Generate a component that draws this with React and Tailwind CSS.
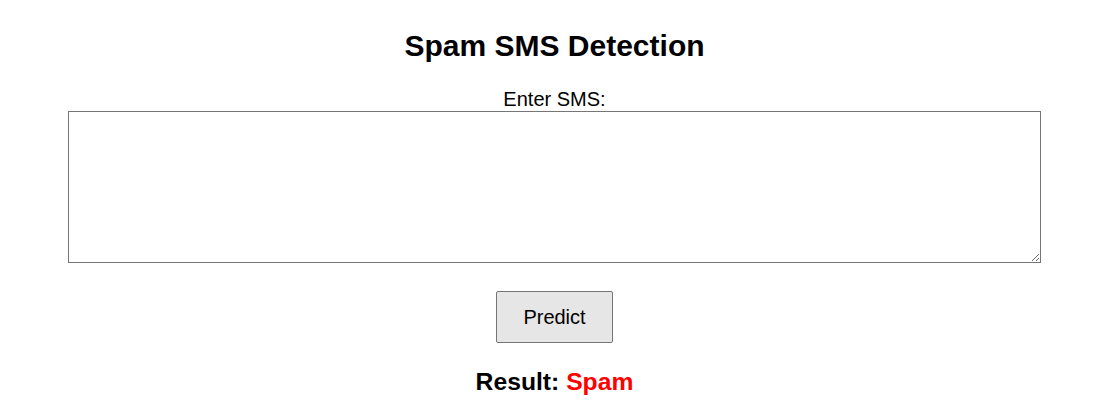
import React, { useState } from "react";

const App = () => {
  const [sms, setSms] = useState("");
  const [result] = useState("Spam");

  return (
    <div className="min-h-screen bg-white pl-[13px] font-['Liberation_Sans',Arial,sans-serif] text-black">
      <div className="flex flex-col items-center pt-[28px]">
        <h1 className="text-[30px] font-bold leading-[36px]">Spam SMS Detection</h1>
        <form className="mt-[24px] flex flex-col items-center" onSubmit={(e) => e.preventDefault()}>
          <label htmlFor="sms" className="text-[20px] leading-[23px]">Enter SMS:</label>
          <textarea
            id="sms"
            value={sms}
            onChange={(e) => setSms(e.target.value)}
            className="h-[152px] w-[973px] resize border border-[#767676] bg-white px-[2px] py-[2px] text-[13px] outline-none"
          />
          <button
            type="submit"
            className="mt-[28px] h-[52px] w-[117px] rounded-[2px] border border-[#767676] bg-[#e6e6e6] text-[20px] leading-[23px] text-black"
          >
            Predict
          </button>
        </form>
        <h2 className="mt-[24px] text-[24.7px] font-bold leading-[29px]">
          Result: <span className="text-[#ff0000]">{result}</span>
        </h2>
      </div>
    </div>
  );
};

export default App;
